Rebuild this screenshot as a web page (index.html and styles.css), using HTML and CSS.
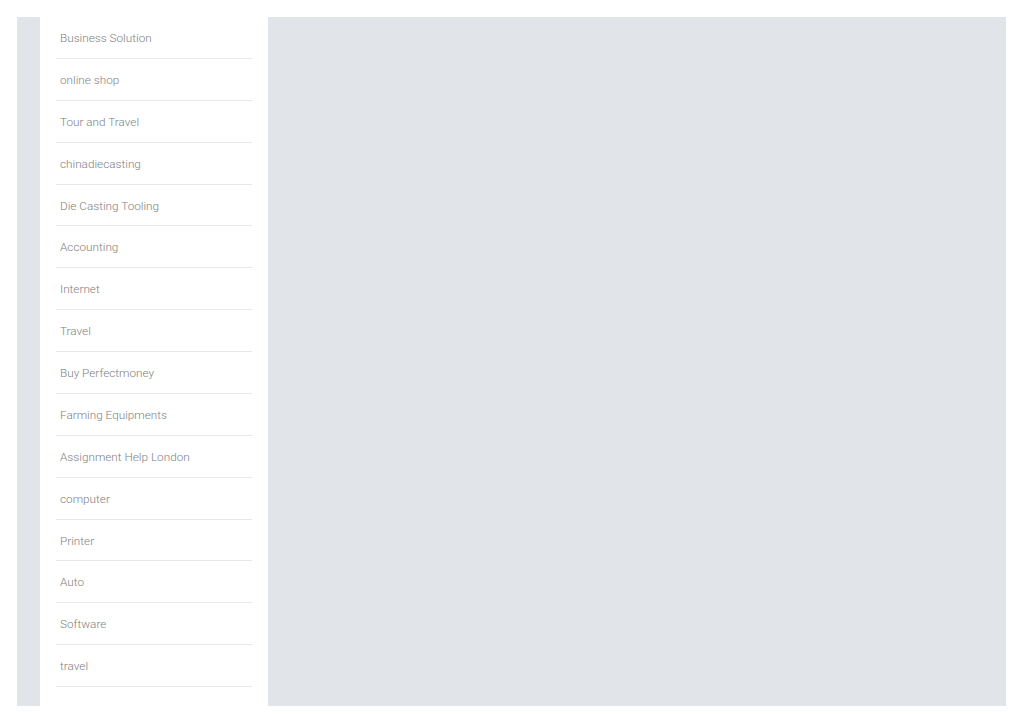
FILE: index.html
```html
<!DOCTYPE html>
<html lang="en">
<head>
    <meta charset="UTF-8">
    <meta name="viewport" content="width=device-width, initial-scale=1.0">
    <title>Categories</title>
    <link rel="stylesheet" href="styles.css">
</head>
<body>
    <div class="page">
        <!-- Category sidebar -->
        <aside class="sidebar">
            <ul class="category-list">
                <li><a href="#">Business Solution</a></li>
                <li><a href="#">online shop</a></li>
                <li><a href="#">Tour and Travel</a></li>
                <li><a href="#">chinadiecasting</a></li>
                <li><a href="#">Die Casting Tooling</a></li>
                <li><a href="#">Accounting</a></li>
                <li><a href="#">Internet</a></li>
                <li><a href="#">Travel</a></li>
                <li><a href="#">Buy Perfectmoney</a></li>
                <li><a href="#">Farming Equipments</a></li>
                <li><a href="#">Assignment Help London</a></li>
                <li><a href="#">computer</a></li>
                <li><a href="#">Printer</a></li>
                <li><a href="#">Auto</a></li>
                <li><a href="#">Software</a></li>
                <li><a href="#">travel</a></li>
            </ul>
        </aside>

        <!-- Main content area -->
        <main class="content"></main>
    </div>
</body>
</html>
```

FILE: styles.css
```css
* {
    margin: 0;
    padding: 0;
    box-sizing: border-box;
}

body {
    font-family: Roboto, "Liberation Sans", Arial, sans-serif;
    background-color: #fff;
    padding: 17px 18px 17px 17px;
}

.page {
    display: flex;
    background-color: #e1e4e8;
    padding-left: 23px;
}

.sidebar {
    width: 228px;
    flex-shrink: 0;
    background-color: #fff;
    padding: 0 16px 19px;
}

.category-list {
    list-style: none;
}

.category-list li {
    border-bottom: 1px solid #e8e8e8;
}

.category-list a {
    display: block;
    padding: 13px 4px 11px;
    line-height: 16.87px;
    font-size: 11.75px;
    font-weight: 300;
    color: #808080;
    text-decoration: none;
}

.category-list a:hover {
    color: #333;
}

.content {
    flex: 1;
}
```
